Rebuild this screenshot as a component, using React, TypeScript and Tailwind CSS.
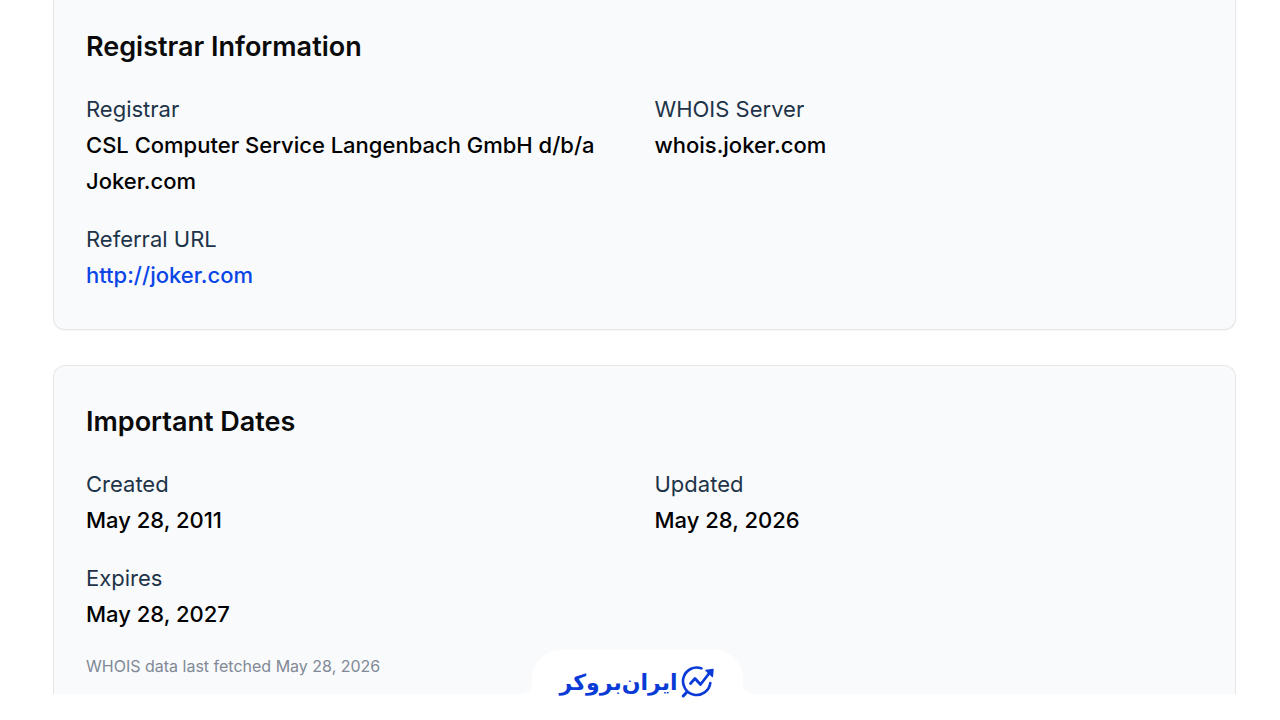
import React from "react";

interface Field {
  label: string;
  value: string;
  href?: string;
}

const registrarFields: Field[] = [
  { label: "Registrar", value: "CSL Computer Service Langenbach GmbH d/b/a Joker.com" },
  { label: "WHOIS Server", value: "whois.joker.com" },
  { label: "Referral URL", value: "http://joker.com", href: "http://joker.com" },
];

const dateFields: Field[] = [
  { label: "Created", value: "May 28, 2011" },
  { label: "Updated", value: "May 28, 2026" },
  { label: "Expires", value: "May 28, 2027" },
];

const FieldGrid = ({ fields }: { fields: Field[] }) => (
  <dl className="mt-6 grid grid-cols-2 gap-x-5 gap-y-[22px] text-[22px] leading-9">
    {fields.map((field) => (
      <div key={field.label}>
        <dt className="text-[#1e3448]">{field.label}</dt>
        <dd className="font-medium text-black">
          {field.href ? (
            <a href={field.href} className="text-[#0a45e6] hover:underline">
              {field.value}
            </a>
          ) : (
            field.value
          )}
        </dd>
      </div>
    ))}
  </dl>
);

const LogoMark = () => (
  <svg width="34" height="34" viewBox="0 0 34 34" fill="none" stroke="currentColor" aria-hidden="true">
    <path d="M20.5 3.4A13.7 13.7 0 1 0 29.3 18" strokeWidth="2.6" strokeLinecap="round" />
    <path d="M5.5 27.5 2.2 31" strokeWidth="3" strokeLinecap="round" />
    <path d="M9.5 18.5 14 13.5l5.5 6L28 8.5" strokeWidth="2.8" strokeLinejoin="round" strokeLinecap="round" />
    <path d="M25 5.5 32 4.5l-.6 7Z" fill="currentColor" strokeWidth="1.4" strokeLinejoin="round" />
  </svg>
);

// White tab that rises out of the page bottom, with flared corners on both sides
const BrandTab = () => (
  <footer className="relative -mt-11 flex justify-center pr-[14px]">
    <svg width="10" height="10" viewBox="0 0 10 10" className="mt-[34px]" aria-hidden="true">
      <path d="M10 0v10H0A10 10 0 0 0 10 0Z" fill="#fff" />
    </svg>
    <div dir="rtl" className="flex h-[69px] items-start gap-1 rounded-t-[28px] bg-white px-7 pt-[15px] text-[#0a3bd6]">
      <LogoMark />
      <span lang="fa" className="font-['DejaVu_Sans',sans-serif] text-[22px] font-bold leading-9">
        ایران‌بروکر
      </span>
    </div>
    <svg width="10" height="10" viewBox="0 0 10 10" className="mt-[34px]" aria-hidden="true">
      <path d="M0 0v10h10A10 10 0 0 1 0 0Z" fill="#fff" />
    </svg>
  </footer>
);

const App = () => {
  return (
    <main className="bg-white pl-[53px] pr-11 font-['Inter',sans-serif]">
      <section className="rounded-b-xl border border-t-0 border-gray-200 bg-[#f9fafc] px-8 pb-9 pt-[27px] shadow-xs">
        <h2 className="text-[27px] font-semibold leading-10 text-[#0a0a0a]">Registrar Information</h2>
        <FieldGrid fields={registrarFields} />
      </section>

      <section className="mt-[35px] rounded-t-xl border border-b-0 border-gray-200 bg-[#f9fafc] px-8 pb-3.5 pt-9">
        <h2 className="text-[27px] font-semibold leading-10 text-[#0a0a0a]">Important Dates</h2>
        <FieldGrid fields={dateFields} />
        <p className="mt-5 text-base leading-7 text-[#808995]">WHOIS data last fetched May 28, 2026</p>
      </section>

      <BrandTab />
    </main>
  );
};

export default App;
